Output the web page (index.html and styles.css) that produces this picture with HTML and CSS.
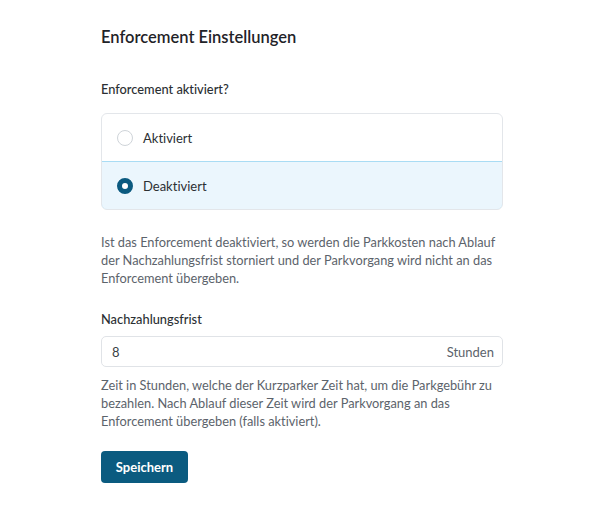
FILE: index.html
```html
<!DOCTYPE html>
<html lang="de">
<head>
    <meta charset="UTF-8">
    <title>Enforcement Einstellungen</title>
    <link rel="stylesheet" href="styles.css">
</head>
<body>
    <div class="settings">
        <h2 class="title">Enforcement Einstellungen</h2>

        <div class="field">
            <div class="field-label">Enforcement aktiviert?</div>
            <div class="options">
                <label class="option">
                    <span class="radio"></span>
                    <span class="option-text">Aktiviert</span>
                </label>
                <label class="option selected">
                    <span class="radio"></span>
                    <span class="option-text">Deaktiviert</span>
                </label>
            </div>
            <p class="hint">Ist das Enforcement deaktiviert, so werden die Parkkosten nach Ablauf der Nachzahlungsfrist storniert und der Parkvorgang wird nicht an das Enforcement übergeben.</p>
        </div>

        <div class="field field-last">
            <div class="field-label compact">Nachzahlungsfrist</div>
            <div class="input-box">
                <span class="input-value">8</span>
                <span class="input-unit">Stunden</span>
            </div>
            <p class="hint">Zeit in Stunden, welche der Kurzparker Zeit hat, um die Parkgebühr zu bezahlen. Nach Ablauf dieser Zeit wird der Parkvorgang an das Enforcement übergeben (falls aktiviert).</p>
        </div>

        <button class="save">Speichern</button>
    </div>
</body>
</html>
```

FILE: styles.css
```css
body {
    margin: 0;
    background: #fff;
    font-family: 'Lato', 'Noto Sans', sans-serif;
    font-variant-ligatures: none;
    color: #222;
}
.settings {
    width: 402px;
    margin-left: 101px;
    padding-top: 26px;
}
.title {
    margin: 0 0 32px;
    font-size: 16.5px;
    font-weight: 600;
    line-height: 22px;
    color: #1f2328;
}
.field {
    margin-bottom: 23px;
}
.field-last {
    margin-bottom: 20px;
}
.field-label {
    font-size: 12.8px;
    font-weight: 500;
    line-height: 18px;
    color: #2b2f33;
    margin-bottom: 15px;
}
.field-label.compact {
    margin-bottom: 8px;
}
.options {
    border: 1px solid #e3e6ea;
    border-radius: 6px;
    overflow: hidden;
}
.option {
    display: flex;
    align-items: center;
    height: 47px;
    padding-left: 15px;
    font-size: 13px;
    color: #2b2f33;
}
.option.selected {
    background: #ebf6fd;
    border: 1px solid #a9dcf4;
    margin: 0 -1px -1px;
    padding-left: 15px;
    border-radius: 0 0 6px 6px;
}
.radio {
    width: 14px;
    height: 14px;
    border: 1px solid #cfd4d9;
    border-radius: 50%;
    margin-right: 10px;
    background: #fff;
}
.selected .radio {
    width: 6px;
    height: 6px;
    border: 5px solid #0b5a80;
}
.hint {
    margin: 23px 0 0;
    font-size: 12.8px;
    line-height: 18px;
    color: #5c636b;
}
.input-box {
    display: flex;
    justify-content: space-between;
    align-items: center;
    height: 29px;
    padding: 0 8px 0 10px;
    border: 1px solid #e0e3e7;
    border-radius: 5px;
    font-size: 13px;
    color: #3a3f44;
}
.input-unit {
    color: #5c636b;
}
.field .input-box + .hint {
    margin-top: 9px;
}
.save {
    margin-top: 1px;
    width: 87px;
    height: 32px;
    border: none;
    border-radius: 4px;
    background: #0b5b80;
    color: #fff;
    font-family: inherit;
    font-size: 13px;
    font-weight: 700;
    cursor: pointer;
}
```
